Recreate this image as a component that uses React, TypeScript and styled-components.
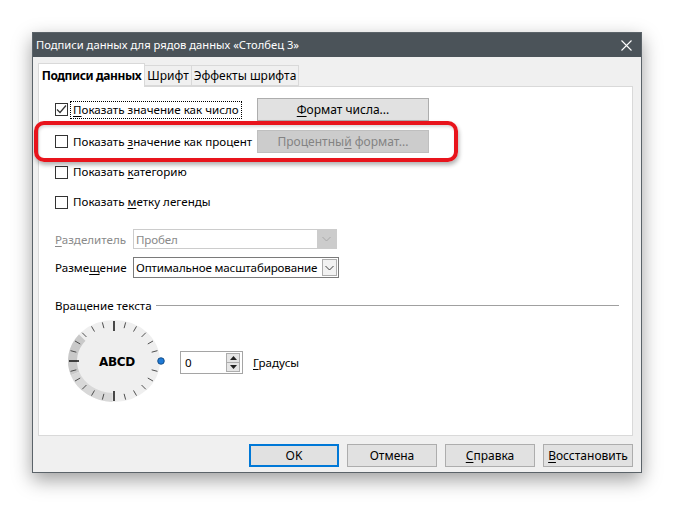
import React from 'react';
import styled, { createGlobalStyle, css } from 'styled-components';

const Global = createGlobalStyle`
  html, body { margin: 0; padding: 0; background: #ffffff; }
  body {
    font-family: "Noto Sans", "Segoe UI", sans-serif;
    font-size: 11.6px;
    color: #000;
  }
  * { box-sizing: border-box; }
`;

const Page = styled.div`
  position: relative;
  width: 674px;
  height: 506px;
  padding: 32px 0 0 32px;
`;

const Window = styled.div`
  width: 610px;
  height: 441px;
  border: 1px solid #5b6369;
  background: #f0f0f0;
  box-shadow: 0 7px 18px rgba(0, 0, 0, 0.38);
  display: flex;
  flex-direction: column;
`;

const TitleBar = styled.div`
  height: 24px;
  flex: none;
  background: #4b5359;
  color: #ffffff;
  display: flex;
  align-items: center;
  justify-content: space-between;
  padding-left: 3px;
`;

const Title = styled.span`
  font-size: 11.2px;
  line-height: 1;
  white-space: nowrap;
`;

const CloseBox = styled.div`
  width: 30px;
  height: 24px;
  display: flex;
  align-items: center;
  justify-content: center;
`;

const Content = styled.div`
  flex: 1;
  display: flex;
  flex-direction: column;
  padding: 6px 8px 5px 5px;
`;

const TabRow = styled.div`
  height: 23px;
  display: flex;
  align-items: flex-end;
  flex: none;
  font-size: 12px;
`;

const Tab = styled.div<{ $active?: boolean; $w: number }>`
  width: ${p => p.$w}px;
  display: flex;
  align-items: center;
  justify-content: center;
  white-space: nowrap;
  border: 1px solid #d9d9d9;
  ${p =>
    p.$active
      ? css`
          height: 24px;
          margin-bottom: -1px;
          background: #ffffff;
          border-bottom: none;
          font-weight: 700;
          letter-spacing: -0.4px;
          position: relative;
          z-index: 1;
        `
      : css`
          height: 21px;
          background: #f0f0f0;
          border-left: none;
        `}
`;

const Panel = styled.div`
  height: 350px;
  flex: none;
  background: #ffffff;
  border: 1px solid #d9d9d9;
  display: flex;
  flex-direction: column;
  padding: 11px 13px 0 16px;
`;

const Row = styled.div<{ $h: number; $mt?: number }>`
  height: ${p => p.$h}px;
  margin-top: ${p => p.$mt ?? 0}px;
  display: flex;
  align-items: center;
  flex: none;
`;

const CheckCell = styled.div`
  width: 202px;
  display: flex;
  align-items: center;
  flex: none;
`;

const Box = styled.div`
  width: 13px;
  height: 13px;
  border: 1px solid #333333;
  background: #ffffff;
  flex: none;
  display: flex;
  align-items: center;
  justify-content: center;
`;

const CheckText = styled.span<{ $focus?: boolean }>`
  margin-left: 2px;
  padding: 0 2px 1px 2px;
  white-space: nowrap;
  border: 1px dotted ${p => (p.$focus ? '#000' : 'transparent')};
`;

const U = styled.span`
  text-decoration: underline;
  text-underline-offset: 2px;
`;

const Btn = styled.div<{ $w: number; $disabled?: boolean; $default?: boolean }>`
  width: ${p => p.$w}px;
  height: 23px;
  display: flex;
  align-items: center;
  justify-content: center;
  flex: none;
  white-space: pre;
  font-size: 12px;
  background: ${p => (p.$disabled ? '#cccccc' : '#e1e1e1')};
  color: ${p => (p.$disabled ? '#838383' : '#000')};
  border: ${p => (p.$default ? '2px solid #0078d7' : p.$disabled ? '1px solid #bfbfbf' : '1px solid #adadad')};
`;

const FieldLabel = styled.span<{ $disabled?: boolean }>`
  width: 78px;
  flex: none;
  color: ${p => (p.$disabled ? '#8a8a8a' : '#000')};
`;

const Select = styled.div<{ $w: number; $disabled?: boolean }>`
  width: ${p => p.$w}px;
  height: ${p => (p.$disabled ? 20 : 21)}px;
  border: 1px solid ${p => (p.$disabled ? '#cccccc' : '#7a7a7a')};
  background: #ffffff;
  display: flex;
  align-items: stretch;
  color: ${p => (p.$disabled ? '#8a8a8a' : '#000')};
`;

const SelectText = styled.span`
  flex: 1;
  padding-left: 2px;
  display: flex;
  align-items: center;
  white-space: nowrap;
  overflow: hidden;
  letter-spacing: -0.15px;
`;

const SelectArrow = styled.div<{ $disabled?: boolean }>`
  width: ${p => (p.$disabled ? 19 : 15)}px;
  flex: none;
  display: flex;
  align-items: center;
  justify-content: center;
  ${p =>
    p.$disabled
      ? css`
          background: #cccccc;
        `
      : css`
          margin: 1px;
          border: 1px solid #adadad;
          background: #f2f2f2;
        `}
`;

const SectionHead = styled.div`
  display: flex;
  align-items: center;
  height: 16px;
  margin-top: 19px;
  flex: none;
`;

const SectionLine = styled.div`
  flex: 1;
  height: 1px;
  background: #a0a0a0;
  margin-left: 4px;
`;

const DialRow = styled.div`
  display: flex;
  align-items: center;
  margin-top: 3px;
  height: 92px;
  flex: none;
`;

const DialSvg = styled.svg`
  margin-left: 7px;
  flex: none;
`;

const Spin = styled.div`
  margin-left: 8px;
  width: 63px;
  height: 23px;
  border: 1px solid #a5a5a5;
  background: #fff;
  display: flex;
  align-items: center;
  padding: 1px 2px 1px 4px;
`;

const SpinValue = styled.span`
  flex: 1;
`;

const SpinButtons = styled.div`
  width: 14px;
  height: 19px;
  border: 1px solid #adadad;
  background: #e6e6e6;
  display: flex;
  flex-direction: column;
`;

const SpinHalf = styled.div<{ $top?: boolean }>`
  flex: 1;
  display: flex;
  align-items: center;
  justify-content: center;
  ${p => (p.$top ? 'border-bottom: 1px solid #adadad;' : '')}
`;

const Degrees = styled.span`
  margin-left: 10px;
`;

const Footer = styled.div`
  display: flex;
  justify-content: flex-end;
  gap: 8px;
  margin-top: 8px;
  flex: none;
`;

const Highlight = styled.div`
  position: absolute;
  left: 34px;
  top: 121px;
  width: 424px;
  height: 41px;
  border: 4px solid #e8141c;
  border-radius: 10px;
  box-shadow: 1px 3px 4px rgba(0, 0, 0, 0.3), inset 1px 2px 3px rgba(0, 0, 0, 0.15);
  pointer-events: none;
`;

const Check = () => (
  <svg width="11" height="11" viewBox="0 0 11 11">
    <path d="M1 5.5 L4 8.5 L10 1.5" fill="none" stroke="#333" strokeWidth="1.2" />
  </svg>
);

const Chevron = ({ color }: { color: string }) => (
  <svg width="9" height="6" viewBox="0 0 9 6">
    <path d="M0.5 1 L4.5 5 L8.5 1" fill="none" stroke={color} strokeWidth="1" />
  </svg>
);

const Dial = () => {
  const cx = 52;
  const cy = 45;
  const rx = 46;
  const ry = 41;
  const ticks: React.ReactNode[] = [];
  for (let a = 15; a < 360; a += 15) {
    const rad = (a * Math.PI) / 180;
    const long = a % 90 === 0;
    const len = long ? 10 : 6;
    const c = Math.cos(rad);
    const s = Math.sin(rad);
    const ox = cx + (rx - 1) * c;
    const oy = cy - (ry - 1) * s;
    const ix = cx + (rx - 1 - len) * c;
    const iy = cy - (ry - 1 - len) * s;
    ticks.push(
      <line
        key={a}
        x1={ox}
        y1={oy}
        x2={ix}
        y2={iy}
        stroke={long ? '#000' : '#3c3c3c'}
        strokeWidth={long ? 1.4 : 0.9}
      />
    );
  }
  const pt = (deg: number, k: number) => {
    const r = (deg * Math.PI) / 180;
    return `${cx + (rx - k) * Math.cos(r)} ${cy - (ry - k) * Math.sin(r)}`;
  };
  return (
    <DialSvg width="110" height="92" viewBox="0 0 110 92">
      <ellipse cx={cx} cy={cy} rx={rx} ry={ry} fill="#efefef" />
      <path d={`M ${pt(140, 4.5)} A ${rx - 4.5} ${ry - 4.5} 0 0 0 ${pt(200, 4.5)}`} fill="none" stroke="#c9c9c9" strokeWidth="9" />
      <path d={`M ${pt(200, 4.5)} A ${rx - 4.5} ${ry - 4.5} 0 0 0 ${pt(268, 4.5)}`} fill="none" stroke="#d8d8d8" strokeWidth="9" />
      {ticks}
      <text x={cx + 3} y={cy + 5} textAnchor="middle" fontFamily="'DejaVu Sans', sans-serif" fontWeight="700" fontSize="12" letterSpacing="-0.3" fill="#000">
        ABCD
      </text>
      <circle cx={cx + rx + 1} cy={cy} r="3.3" fill="#1f7ad6" stroke="#0a3f73" strokeWidth="0.8" />
    </DialSvg>
  );
};

export default function App() {
  return (
    <>
      <Global />
      <Page>
        <Window>
          <TitleBar>
            <Title>Подписи данных для рядов данных «Столбец 3»</Title>
            <CloseBox>
              <svg width="11" height="11" viewBox="0 0 11 11">
                <path d="M0.5 0.5 L10.5 10.5 M10.5 0.5 L0.5 10.5" stroke="#fff" strokeWidth="1.1" />
              </svg>
            </CloseBox>
          </TitleBar>
          <Content>
            <TabRow>
              <Tab $active $w={107}>Подписи данных</Tab>
              <Tab $w={47}>Шрифт</Tab>
              <Tab $w={107}>Эффекты шрифта</Tab>
            </TabRow>
            <Panel>
              <Row $h={23}>
                <CheckCell>
                  <Box><Check /></Box>
                  <CheckText $focus><U>П</U>оказать значение как число</CheckText>
                </CheckCell>
                <Btn $w={172}><U>Ф</U>ормат числа...</Btn>
              </Row>
              <Row $h={23} $mt={9}>
                <CheckCell>
                  <Box />
                  <CheckText>Показать <U>з</U>начение как процент</CheckText>
                </CheckCell>
                <Btn $w={172} $disabled>{'Процентны'}<U>й</U>{' формат...'}</Btn>
              </Row>
              <Row $h={20} $mt={9}>
                <CheckCell>
                  <Box />
                  <CheckText>Показать <U>к</U>атегорию</CheckText>
                </CheckCell>
              </Row>
              <Row $h={20} $mt={10}>
                <CheckCell>
                  <Box />
                  <CheckText>Показать <U>м</U>етку легенды</CheckText>
                </CheckCell>
              </Row>
              <Row $h={20} $mt={17}>
                <FieldLabel $disabled><U>Р</U>азделитель</FieldLabel>
                <Select $w={204} $disabled>
                  <SelectText>Пробел</SelectText>
                  <SelectArrow $disabled><Chevron color="#a8a8a8" /></SelectArrow>
                </Select>
              </Row>
              <Row $h={21} $mt={8}>
                <FieldLabel>Разме<U>щ</U>ение</FieldLabel>
                <Select $w={206}>
                  <SelectText>Оптимальное масштабирование</SelectText>
                  <SelectArrow><Chevron color="#404040" /></SelectArrow>
                </Select>
              </Row>
              <SectionHead>
                <span>Вращение текста</span>
                <SectionLine />
              </SectionHead>
              <DialRow>
                <Dial />
                <Spin>
                  <SpinValue>0</SpinValue>
                  <SpinButtons>
                    <SpinHalf $top>
                      <svg width="7" height="4" viewBox="0 0 7 4"><path d="M0 4 L3.5 0 L7 4 Z" fill="#222" /></svg>
                    </SpinHalf>
                    <SpinHalf>
                      <svg width="7" height="4" viewBox="0 0 7 4"><path d="M0 0 L3.5 4 L7 0 Z" fill="#222" /></svg>
                    </SpinHalf>
                  </SpinButtons>
                </Spin>
                <Degrees><U>Г</U>радусы</Degrees>
              </DialRow>
            </Panel>
            <Footer>
              <Btn $w={90} $default>OK</Btn>
              <Btn $w={90}>Отмена</Btn>
              <Btn $w={90}><U>С</U>правка</Btn>
              <Btn $w={90}><U>В</U>осстановить</Btn>
            </Footer>
          </Content>
        </Window>
        <Highlight />
      </Page>
    </>
  );
}
